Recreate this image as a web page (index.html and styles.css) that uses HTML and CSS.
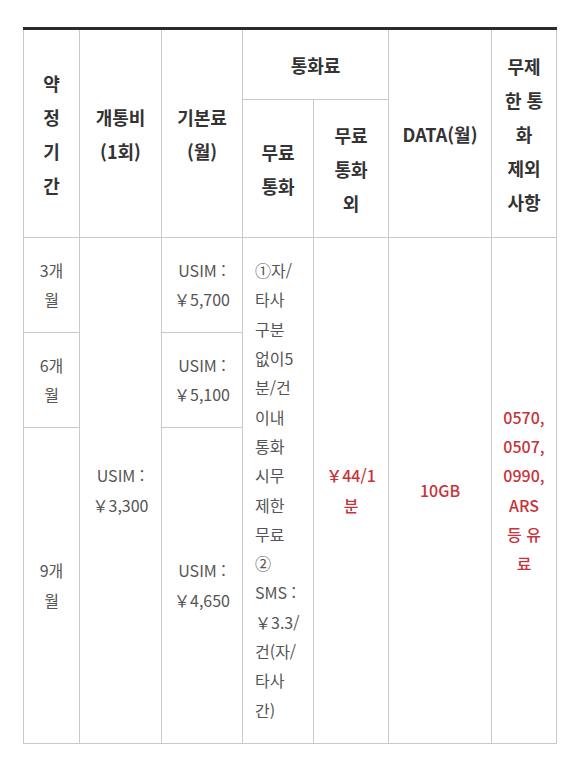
FILE: index.html
```html
<!DOCTYPE html>
<html lang="ko">
<head>
<meta charset="utf-8">
<title>요금표</title>
<link rel="stylesheet" href="styles.css">
</head>
<body>
<table class="plan">
  <colgroup>
    <col class="c-term">
    <col class="c-open">
    <col class="c-base">
    <col class="c-free">
    <col class="c-paid">
    <col class="c-data">
    <col class="c-excl">
  </colgroup>
  <thead>
    <tr>
      <th rowspan="2">약<br>정<br>기<br>간</th>
      <th rowspan="2">개통비<br>(1회)</th>
      <th rowspan="2">기본료<br>(월)</th>
      <th colspan="2">통화료</th>
      <th rowspan="2">DATA(월)</th>
      <th rowspan="2">무제<br>한 통<br>화<br>제외<br>사항</th>
    </tr>
    <tr>
      <th>무료<br>통화</th>
      <th>무료<br>통화<br>외</th>
    </tr>
  </thead>
  <tbody>
    <tr class="short">
      <td>3개<br>월</td>
      <td rowspan="3">USIM :<br>￥3,300</td>
      <td>USIM :<br>￥5,700</td>
      <td rowspan="3" class="left">①자/<br>타사<br>구분<br>없이5<br>분/건<br>이내<br>통화<br>시무<br>제한<br>무료<br>②<br>SMS :<br>￥3.3/<br>건(자/<br>타사<br>간)</td>
      <td rowspan="3" class="red">￥44/1<br>분</td>
      <td rowspan="3" class="red">10GB</td>
      <td rowspan="3" class="red">0570,<br>0507,<br>0990,<br>ARS<br>등 유<br>료</td>
    </tr>
    <tr class="short">
      <td>6개<br>월</td>
      <td>USIM :<br>￥5,100</td>
    </tr>
    <tr class="tall">
      <td>9개<br>월</td>
      <td>USIM :<br>￥4,650</td>
    </tr>
  </tbody>
</table>
</body>
</html>
```

FILE: styles.css
```css
html, body {
  margin: 0;
  padding: 0;
  background: #ffffff;
}

body {
  font-family: "Noto Sans CJK KR", "Noto Sans", sans-serif;
  padding: 27px 0 0 23px;
}

.plan {
  border-collapse: collapse;
  table-layout: fixed;
  width: 534px;
  border-top: 3px solid #2b2b2b;
}

.c-term { width: 56px; }
.c-open { width: 82px; }
.c-base { width: 81px; }
.c-free { width: 71px; }
.c-paid { width: 75px; }
.c-data { width: 103px; }
.c-excl { width: 65px; }

.plan th,
.plan td {
  border: 1px solid #c9c9c9;
  padding: 17px 0;
  text-align: center;
  vertical-align: middle;
  white-space: nowrap;
}

.plan th {
  font-size: 18px;
  line-height: 34px;
  font-weight: 700;
  color: #333333;
  padding: 17.5px 0;
}

.plan td {
  font-size: 16px;
  line-height: 29.3px;
  font-weight: 400;
  color: #555555;
}

.plan tr.short {
  height: 95px;
}

.plan tr.tall {
  height: 316px;
}

.plan td.left {
  text-align: left;
  padding-left: 12px;
}

.plan td.red {
  color: #c8333b;
  font-weight: 500;
}
```
